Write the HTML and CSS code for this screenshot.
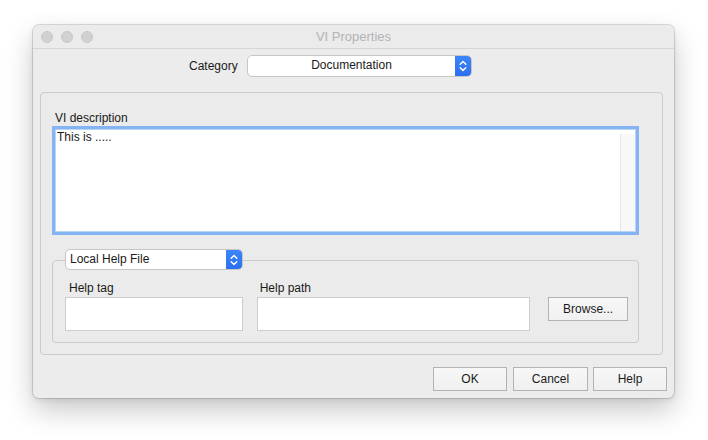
FILE: index.html
```html
<!DOCTYPE html>
<html>
<head>
<meta charset="utf-8">
<link rel="stylesheet" href="styles.css">
</head>
<body>
<div class="window">
  <div class="titlebar">
    <div class="lights"><span></span><span></span><span></span></div>
    <div class="title">VI Properties</div>
  </div>
  <div class="content">
    <div class="cat-row">
      <span class="cat-label">Category</span>
      <div class="popup popup-cat">
        <span class="popup-text">Documentation</span>
        <span class="stepper"><svg width="10" height="14" viewBox="0 0 10 14"><path d="M2.2 5.2 L5 2.4 L7.8 5.2 M2.2 8.8 L5 11.6 L7.8 8.8" fill="none" stroke="#fff" stroke-width="1.4" stroke-linecap="round" stroke-linejoin="round"/></svg></span>
      </div>
    </div>
    <div class="group">
      <div class="lbl desc-lbl">VI description</div>
      <div class="textarea">
        <div class="ta-text">This is .....</div>
        <div class="ta-scroll"></div>
      </div>
      <div class="popup popup-help">
        <span class="popup-text">Local Help File</span>
        <span class="stepper"><svg width="10" height="14" viewBox="0 0 10 14"><path d="M2.2 5.2 L5 2.4 L7.8 5.2 M2.2 8.8 L5 11.6 L7.8 8.8" fill="none" stroke="#fff" stroke-width="1.4" stroke-linecap="round" stroke-linejoin="round"/></svg></span>
      </div>
      <div class="subgroup">
        <div class="field field-tag">
          <div class="lbl">Help tag</div>
          <div class="input"></div>
        </div>
        <div class="field field-path">
          <div class="lbl">Help path</div>
          <div class="input"></div>
        </div>
        <div class="btn browse">Browse...</div>
      </div>
    </div>
    <div class="buttons">
      <div class="btn b-ok">OK</div>
      <div class="btn b-cancel">Cancel</div>
      <div class="btn b-help">Help</div>
    </div>
  </div>
</div>
</body>
</html>
```
FILE: styles.css
```css
* { box-sizing: border-box; }
html, body { margin: 0; padding: 0; background: #ffffff; }
body {
  width: 708px; height: 440px; overflow: hidden;
  font-family: "Liberation Sans", Arial, sans-serif;
  font-size: 12px; color: #1a1a1a;
  padding: 25px 0 0 33px;
}
.window {
  width: 641px; height: 373px;
  background: #ececec;
  border-radius: 6px;
  box-shadow: 0 0 0 1px rgba(0,0,0,0.13), 0 12px 28px rgba(0,0,0,0.22), 0 2px 6px rgba(0,0,0,0.08);
  display: flex; flex-direction: column;
}
.titlebar {
  height: 24px;
  border-bottom: 1px solid #d6d6d6;
  background: #ebebeb;
  border-radius: 6px 6px 0 0;
  display: flex; align-items: center;
  position: relative;
}
.lights { display: flex; gap: 8px; padding-left: 8px; }
.lights span {
  width: 12px; height: 12px; border-radius: 50%;
  background: #d1d1d1; border: 1px solid #c7c7c7;
}
.title {
  position: absolute; left: 0; right: 0; top: 0; height: 23px;
  text-align: center; line-height: 24px;
  font-size: 13px; color: #b3b3b3;
}
.content {
  flex: 1;
  display: flex; flex-direction: column;
  padding: 6px 7px 7px 7px;
}
.cat-row { display: flex; align-items: center; padding-left: 149px; height: 22px; }
.cat-label { width: 58px; }
.popup {
  display: flex; align-items: stretch;
  background: #fff;
  border: 1px solid #c6c6c6;
  border-radius: 5px;
  overflow: hidden;
}
.popup-cat { width: 225px; height: 22px; }
.popup-cat .popup-text { flex: 1; text-align: center; line-height: 19px; }
.stepper {
  width: 16px;
  background: linear-gradient(#3d86f7, #2b6ff0);
  display: flex; align-items: center; justify-content: center;
}
.group {
  margin-top: 15px;
  width: 623px;
  height: 263px;
  border: 1px solid #cbcbcb;
  border-radius: 4px;
  background: #ebebeb;
  padding: 18px 23px 0 11px;
  display: flex; flex-direction: column;
}
.lbl { line-height: 14px; height: 14px; }
.desc-lbl { padding-left: 3px; }
.textarea {
  margin-top: 1px;
  height: 109px;
  border: 3px solid #84b4f3;
  background: #fff;
  display: flex;
  box-shadow: inset 0 0 0 1px #b8d4f7;
}
.ta-text { flex: 1; padding: 1px 2px; line-height: 14px; }
.ta-scroll {
  width: 15px; margin: 5px 1px 1px 0;
  background: #f8f8f8; border-left: 1px solid #e4e4e4;
}
.popup-help {
  margin: 14px 0 -10px 13px;
  width: 178px; height: 21px;
  position: relative; z-index: 1;
}
.popup-help .popup-text { flex: 1; padding-left: 4px; line-height: 19px; }
.subgroup {
  height: 83px;
  border: 1px solid #cbcbcb;
  border-radius: 4px;
  padding: 20px 10px 0 12px;
  display: flex; align-items: flex-start;
}
.field { display: flex; flex-direction: column; gap: 2px; }
.field-tag { width: 178px; }
.field-tag .lbl { padding-left: 4px; }
.field-path { width: 274px; margin-left: 14px; }
.field-path .lbl { padding-left: 3px; }
.input {
  height: 34px; background: #fff;
  border: 1px solid #cdcdcd;
}
.btn {
  height: 24px;
  border: 1px solid #b3b3b3;
  background: linear-gradient(#f7f7f7, #f0f0f0);
  text-align: center; line-height: 22px;
}
.browse { width: 80px; margin-left: 18px; margin-top: 16px; }
.buttons {
  margin-top: 12px;
  display: flex; justify-content: flex-end;
}
.b-ok { width: 74px; }
.b-cancel { width: 75px; margin-left: 6px; }
.b-help { width: 74px; margin-left: 5px; }
```
